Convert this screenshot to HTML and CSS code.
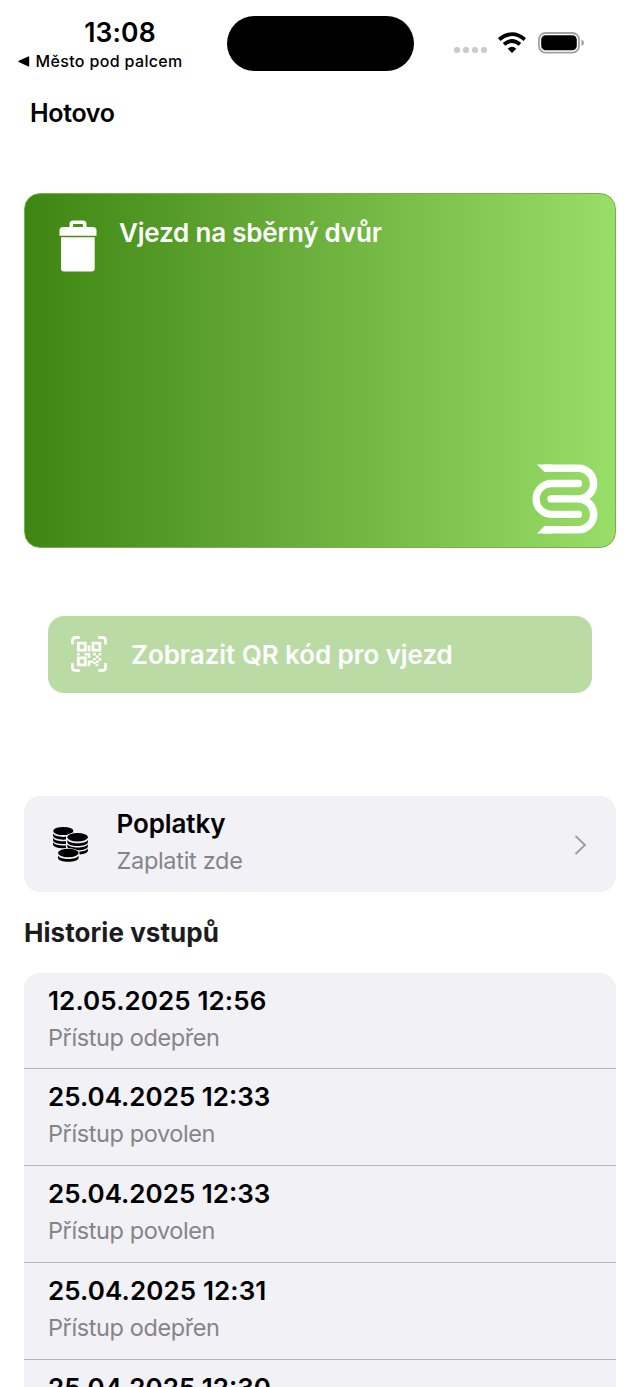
FILE: index.html
```html
<!DOCTYPE html>
<html lang="cs">
<head>
<meta charset="utf-8">
<title>Vjezd na sběrný dvůr</title>
<link rel="stylesheet" href="styles.css">
</head>
<body>
<div class="screen">
  <header class="status">
    <div class="status-left">
      <div class="time">13:08</div>
      <div class="back"><svg width="12" height="11" viewBox="0 0 12 11"><path d="M.8 4.8 10.3.4Q11.200 0 11.200.9V9.900Q11.200 10.800 10.300 10.400L.8 6Q-.2 5.400.8 4.800Z"/></svg><span>Město pod palcem</span></div>
    </div>
    <div class="island"></div>
    <div class="status-right">
      <svg width="132" height="24" viewBox="0 0 132 24">
        <g fill="#cbcbcd"><rect x="0" y="15" width="6" height="6" rx="2.500"/><rect x="9" y="15" width="6" height="6" rx="2.500"/><rect x="18" y="15" width="6" height="6" rx="2.500"/><rect x="27" y="15" width="6" height="6" rx="2.500"/></g>
        <path d="M58 21 53.700 16.700Q58 13 62.300 16.700Z"/>
        <g fill="none" stroke="#000" stroke-width="3.800"><path d="M45.200 7.500Q58-3.200 70.800 7.500"/><path d="M50 12.400Q58 5.700 66 12.400"/></g>
        <rect x="85" y="1" width="40" height="19.600" rx="6.500" fill="none" stroke="#a0a0a2" stroke-width="1.800"/>
        <rect x="87.200" y="3.300" width="35.600" height="15" rx="4.500"/>
        <path d="M127.500 7.500Q130 8.200 130 10.700T127.500 14Z" fill="#a0a0a2"/>
      </svg>
    </div>
  </header>
  <nav class="nav">Hotovo</nav>
  <main>
    <section class="card">
      <div class="card-head">
        <svg class="bin" width="38" height="52" viewBox="0 0 38 52"><path fill="#fff" fill-rule="evenodd" d="M10.500 7V4Q10.500.5 14 .5H24Q27.500.5 27.500 4V7H34Q37.500 7 37.500 10.500V15.700H.5V10.500Q.5 7 4 7ZM14 7H24V4.700Q24 4 23.200 4H14.800Q14 4 14 4.700ZM2 17.200H35.700V48.500Q35.700 51.500 32.700 51.500H5Q2 51.500 2 48.500Z"/></svg>
        <h1 class="card-title">Vjezd na sběrný dvůr</h1>
      </div>
      <svg class="brand" width="66" height="70" viewBox="0 0 66 70">
        <path fill="#fff" d="M5 .5H20V8H12.500ZM5 69.500H20V62H12.500Z"/>
        <path fill="none" stroke="#fff" stroke-width="7.500" d="M12 4.250H46.300A15.350 15.350 0 0 1 46.300 34.950A15.400 15.400 0 0 1 46.300 65.750H12"/>
        <path fill="none" stroke="#fff" stroke-width="7.300" stroke-linecap="round" d="M46.500 19.500H19.500A15.400 15.400 0 0 0 19.500 50.300H46.500M19 34.900H48"/>
      </svg>
    </section>
    <button class="qr-button">
      <svg width="36" height="36" viewBox="0 0 36 36">
        <path fill="none" stroke="#fff" stroke-width="2.800" d="M1.500 8.500V4.500Q1.500 1.500 4.500 1.500H8.700M27.300 1.500H31.500Q34.500 1.500 34.500 4.500V8.500M1.500 27V31.500Q1.500 34.500 4.500 34.500H8.700M27.300 34.500H31.500Q34.500 34.500 34.500 31.500V27"/>
        <g fill="none" stroke="#fff" stroke-width="2.800"><rect x="7.300" y="7.200" width="7" height="7"/><rect x="21.900" y="7.200" width="7" height="7"/><rect x="7.300" y="21.900" width="7" height="7"/></g>
        <path fill="#fff" d="M16.700 9.500H19.300V15.500H16.700ZM6 17H8.700V19.500H6ZM13.500 17H19.300V22H16.700V19.500H13.500ZM22 17H25V19.500H22ZM27.700 17H30.300V19.500H27.700ZM25 19.500H27.700V22H25ZM22 22H25V24.500H22ZM27.700 22H30.300V24.500H27.700ZM16.700 24.500H22V27H19.300V30.200H16.700ZM25 24.500H27.700V27H25ZM22 26H25V27.700H22ZM24.500 27.700H27.200V30.200H24.500Z"/>
      </svg>
      <span class="qr-label">Zobrazit QR kód pro vjezd</span>
    </button>
    <section class="fees">
      <svg width="36" height="36" viewBox="0 0 36 36">
        <defs><g id="coin"><path d="M0 4.200V6.200C0 11.600 20.600 11.600 20.600 6.200V4.200C18 8.600 2.600 8.600 0 4.200Z"/></g></defs>
        <ellipse cx="10.300" cy="5" rx="10.100" ry="4.100"/>
        <use href="#coin" y="3.400"/><use href="#coin" y="7.700"/><use href="#coin" y="12"/>
        <path fill="#f2f1f6" d="M13 11C13 5 36 5 36 11V29H13Z"/>
        <ellipse cx="24.600" cy="11.300" rx="10.300" ry="4.200"/>
        <use href="#coin" x="14.300" y="9.700"/><use href="#coin" x="14.300" y="14"/><use href="#coin" x="14.300" y="18.300"/>
        <path fill="#f2f1f6" d="M4 27C4 20.500 26.500 20.500 26.500 27V36H4Z"/>
        <ellipse cx="15.300" cy="27" rx="10.300" ry="4.200"/><use href="#coin" x="5" y="25.500"/>
      </svg>
      <div class="fees-text"><div class="title">Poplatky</div><div class="sub">Zaplatit zde</div></div>
      <svg class="chevron" width="13" height="20" viewBox="0 0 13 20"><path d="M1.500 1 11 10 1.500 19" fill="none" stroke="#9c9c9e" stroke-width="1.800"/></svg>
    </section>
    <h2 class="history-title">Historie vstupů</h2>
    <section class="history">
      <div class="entry"><div class="title d1">12.05.2025 12:56</div><div class="sub">Přístup odepřen</div></div>
      <div class="entry"><div class="title d2">25.04.2025 12:33</div><div class="sub">Přístup povolen</div></div>
      <div class="entry"><div class="title d2">25.04.2025 12:33</div><div class="sub">Přístup povolen</div></div>
      <div class="entry"><div class="title d1">25.04.2025 12:31</div><div class="sub">Přístup odepřen</div></div>
      <div class="entry"><div class="title d2">25.04.2025 12:30</div></div>
    </section>
  </main>
</div>
</body>
</html>
```
FILE: styles.css
```css
* { box-sizing: border-box; }
body { margin: 0; background: #fff; color: #000; font-family: Inter, "Liberation Sans", sans-serif; }
svg { display: block; flex: none; }
.screen { height: 1387px; overflow: hidden; }
.status { height: 88px; display: flex; }
.status-left { width: 226.500px; padding: 17px 0 0 18px; }
.time { width: 204px; text-align: center; font-size: 26.500px; line-height: 31px; font-weight: 600; letter-spacing: .1px; }
.back { display: flex; align-items: center; gap: 5.500px; height: 26px; font-size: 16px; font-weight: 500; letter-spacing: .35px; white-space: nowrap; }
.island { width: 187px; height: 55px; margin-top: 16.400px; border-radius: 28px; background: #000; }
.status-right { padding: 32px 0 0 40.500px; }
.nav { height: 105px; padding: 10px 30px; font-size: 25px; line-height: 30px; font-weight: 600; letter-spacing: -.35px; }
main { padding: 0 24px; }
.card { height: 355px; border: 1.500px solid #73b446; border-radius: 16px; background: linear-gradient(90deg, #3f8511, #99de69) border-box; display: flex; flex-direction: column; justify-content: space-between; padding: 26px 17px 13px 33.500px; }
.card-head { display: flex; gap: 22.500px; }
.card-title { margin: -4px 0 0; color: #fff; font-size: 26px; line-height: 34px; font-weight: 600; letter-spacing: -.2px; }
.brand { align-self: flex-end; }
.qr-button { width: 544px; height: 77px; margin: 67.500px 24px 103.500px; padding: 0 23px; border: 0; border-radius: 16px; background: #badba3; color: #fff; display: flex; align-items: center; gap: 24px; font: 600 26px/34px Inter, "Liberation Sans", sans-serif; letter-spacing: -.07px; }
.qr-label { padding-top: 2px; }
.fees { height: 96px; border-radius: 16px; background: #f2f1f6; padding: 0 29px; display: flex; align-items: center; }
.fees-text { flex: 1; height: 96px; padding: 9px 0 0 27.500px; }
.chevron { margin-top: 2px; }
.title { height: 37px; font-size: 26px; line-height: 37px; font-weight: 600; letter-spacing: -.1px; }
.d1 { letter-spacing: .1px; }
.d2 { letter-spacing: 0; }
.sub { height: 37px; font-size: 23.500px; line-height: 37px; color: #858587; letter-spacing: -.3px; }
.entry .sub { letter-spacing: -.4px; }
.history-title { margin: 24px 0 22.500px; font-size: 26px; line-height: 34px; font-weight: 700; color: #1c1c1e; letter-spacing: .05px; }
.history { border-radius: 16px 16px 0 0; background: #f2f1f6; }
.entry { height: 96.800px; padding: 9px 24px 0; border-bottom: 1px solid #b8b7bd; }
```
